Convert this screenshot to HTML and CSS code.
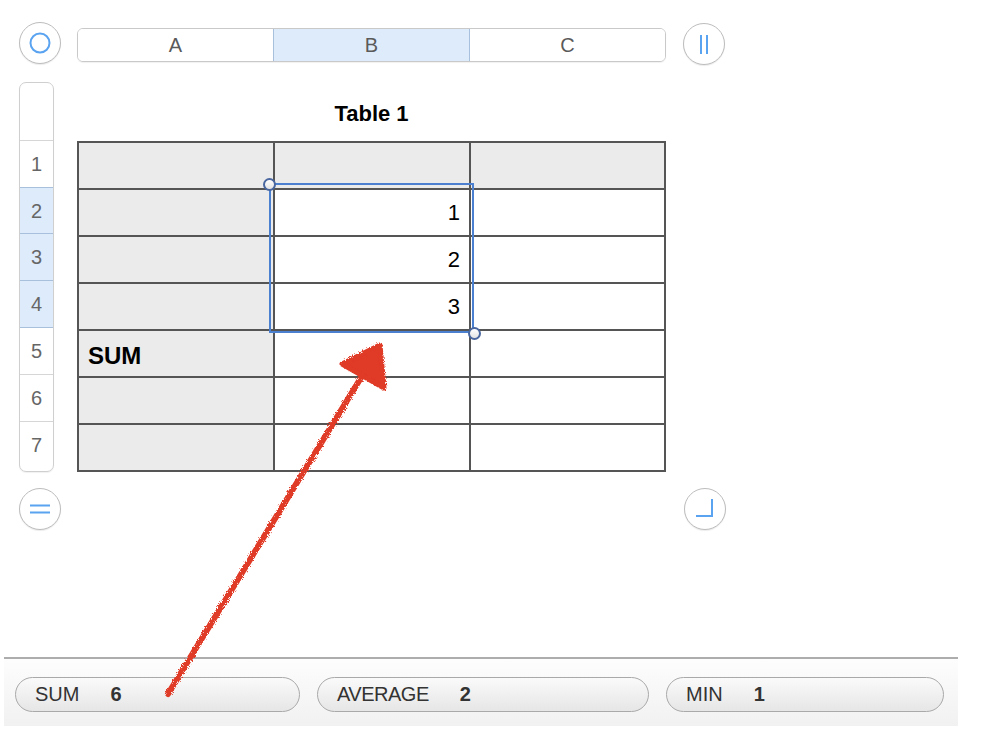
FILE: index.html
```html
<!DOCTYPE html>
<html>
<head>
<meta charset="utf-8">
<link rel="stylesheet" href="styles.css">
</head>
<body>
<div class="page">
  <div class="top-row">
    <div class="round-btn">
      <svg width="42" height="42" viewBox="0 0 42 42"><circle cx="21" cy="21" r="9.5" fill="none" stroke="#5aa3f0" stroke-width="2"/></svg>
    </div>
    <div class="col-bar">
      <div class="col-seg">A</div>
      <div class="col-seg sel">B</div>
      <div class="col-seg">C</div>
    </div>
    <div class="round-btn">
      <svg width="42" height="42" viewBox="0 0 42 42"><path d="M18 12v19M24 12v19" stroke="#5aa3f0" stroke-width="2" fill="none"/></svg>
    </div>
  </div>

  <div class="mid-row">
    <div class="row-head">
      <div class="rh-top"></div>
      <div class="rh">1</div>
      <div class="rh sel">2</div>
      <div class="rh sel">3</div>
      <div class="rh sel">4</div>
      <div class="rh">5</div>
      <div class="rh">6</div>
      <div class="rh last">7</div>
    </div>
    <div class="table-area">
      <div class="title">Table 1</div>
      <div class="table-wrap">
        <div class="grid">
          <div class="c hd"></div><div class="c hd"></div><div class="c hd"></div>
          <div class="c hd"></div><div class="c num">1</div><div class="c"></div>
          <div class="c hd"></div><div class="c num">2</div><div class="c"></div>
          <div class="c hd"></div><div class="c num">3</div><div class="c"></div>
          <div class="c hd lbl">SUM</div><div class="c"></div><div class="c"></div>
          <div class="c hd"></div><div class="c"></div><div class="c"></div>
          <div class="c hd"></div><div class="c"></div><div class="c"></div>
        </div>
        <div class="selection"></div>
        <div class="handle h1"></div>
        <div class="handle h2"></div>
      </div>
    </div>
  </div>

  <div class="bottom-row">
    <div class="round-btn">
      <svg width="42" height="42" viewBox="0 0 42 42"><path d="M11 17.5h20M11 24.5h20" stroke="#5aa3f0" stroke-width="2" fill="none"/></svg>
    </div>
    <div class="round-btn">
      <svg width="42" height="42" viewBox="0 0 42 42"><path d="M28 11v17H12" stroke="#5aa3f0" stroke-width="2" fill="none"/></svg>
    </div>
  </div>

  <div class="footer">
    <div class="pill p1"><span class="lab">SUM</span><span class="val">6</span></div>
    <div class="pill p2"><span class="lab">AVERAGE</span><span class="val">2</span></div>
    <div class="pill p3"><span class="lab">MIN</span><span class="val">1</span></div>
  </div>

  <svg class="arrow" width="990" height="734" viewBox="0 0 990 734">
    <defs>
      <filter id="rough" x="-10%" y="-10%" width="120%" height="120%">
        <feTurbulence type="fractalNoise" baseFrequency="1.2" numOctaves="2" result="n"/>
        <feDisplacementMap in="SourceGraphic" in2="n" scale="4"/>
      </filter>
    </defs>
    <g filter="url(#rough)" fill="#e03a26" stroke="#e03a26" stroke-linejoin="round" stroke-linecap="round">
      <path d="M168 694 L362 376" stroke-width="6" fill="none"/>
      <path d="M380 345 L342 364 L384 388 Z" stroke-width="5"/>
    </g>
  </svg>
</div>
</body>
</html>
```

FILE: styles.css
```css
* { box-sizing: border-box; }
html, body { margin: 0; padding: 0; background: #fff; }
body { font-family: "Liberation Sans", Arial, sans-serif; width: 990px; height: 734px; overflow: hidden; }

.page { position: relative; width: 990px; height: 734px; padding-top: 22px; }

.round-btn {
  width: 42px; height: 42px; border-radius: 50%;
  border: 1px solid #bdbdbd; background: #fff;
  box-shadow: 0 1px 1px rgba(0,0,0,0.08);
  flex: none; position: relative;
}
.round-btn svg { position: absolute; left: -1px; top: -1px; }

.top-row { display: flex; align-items: flex-start; padding-left: 19px; }
.col-bar {
  margin-left: 16px; margin-top: 6px; width: 589px; height: 34px;
  display: flex; border: 1px solid #c9c9c9; border-radius: 6px; overflow: hidden;
  box-shadow: 0 1px 1px rgba(0,0,0,0.06);
}
.col-bar + .round-btn { margin-left: 17px; margin-top: 1px; }
.col-seg {
  flex: 1; text-align: center; line-height: 32px; font-size: 20px; color: #5a5a5a;
  border-right: 1px solid #c9c9c9; background: #fff;
}
.col-seg:last-child { border-right: none; }
.col-seg.sel { background: #deebfb; border-left: 1px solid #a9c0dc; border-right: 1px solid #a9c0dc; margin-left: -1px; }

.mid-row { display: flex; padding-left: 19px; margin-top: 17px; }
.row-head {
  width: 35px; border: 1px solid #cfcfcf; border-radius: 7px; overflow: hidden;
  box-shadow: 0 1px 1px rgba(0,0,0,0.06);
}
.rh-top { height: 58px; border-bottom: 1px solid #d6d6d6; }
.rh {
  height: 47px; line-height: 46px; text-align: center; font-size: 20px; color: #666;
  border-bottom: 1px solid #d6d6d6;
}
.rh.last { border-bottom: none; height: 46px; }
.rh.sel { background: #deebfb; border-bottom-color: #a9c0dc; }
.rh.sel:nth-child(3) { border-top: 1px solid #a9c0dc; margin-top: -1px; }

.table-area { margin-left: 23px; width: 589px; }
.title { height: 59px; text-align: center; font-weight: bold; font-size: 22px; line-height: 64px; color: #000; }
.table-wrap { position: relative; }
.grid {
  display: grid; grid-template-columns: 194px 194px 193px; grid-auto-rows: 45px;
  gap: 2px; padding: 2px; background: #555; width: 589px;
}
.c { background: #fff; font-size: 22px; color: #000; }
.c.hd { background: #ebebeb; }
.c.num { text-align: right; padding-right: 9px; line-height: 46px; }
.c.lbl { font-weight: bold; font-size: 24px; padding-left: 9px; line-height: 50px; }

.selection {
  position: absolute; left: 192px; top: 42px; width: 205px; height: 150px;
  border: 2px solid #4a80cf;
}
.handle {
  position: absolute; width: 13px; height: 13px; border-radius: 50%;
  background: linear-gradient(#fff, #e4e4e4); border: 2px solid #4a67a0;
}
.h1 { left: 186px; top: 37px; }
.h2 { left: 391px; top: 186px; }

.bottom-row { display: flex; justify-content: space-between; width: 726px; padding-left: 19px; margin-top: 16px; }

.footer {
  position: absolute; left: 4px; top: 657px; width: 954px; height: 69px;
  border-top: 2px solid #adadad;
  background: linear-gradient(#fdfdfd, #f1f1f1);
  display: flex; gap: 17px; padding: 18px 0 0 11px;
}
.pill {
  height: 35px; border: 1.5px solid #a9a9a9; border-radius: 18px;
  background: linear-gradient(#fafafa, #e6e6e6);
  display: flex; align-items: center; padding-left: 19px; font-size: 20px; color: #333;
}
.pill .val { font-weight: bold; margin-left: 31px; }
.p2 .lab { letter-spacing: -0.5px; }
.p1 { width: 285px; }
.p2 { width: 332px; }
.p3 { width: 278px; }

.arrow { position: absolute; left: 0; top: 0; pointer-events: none; }
```
